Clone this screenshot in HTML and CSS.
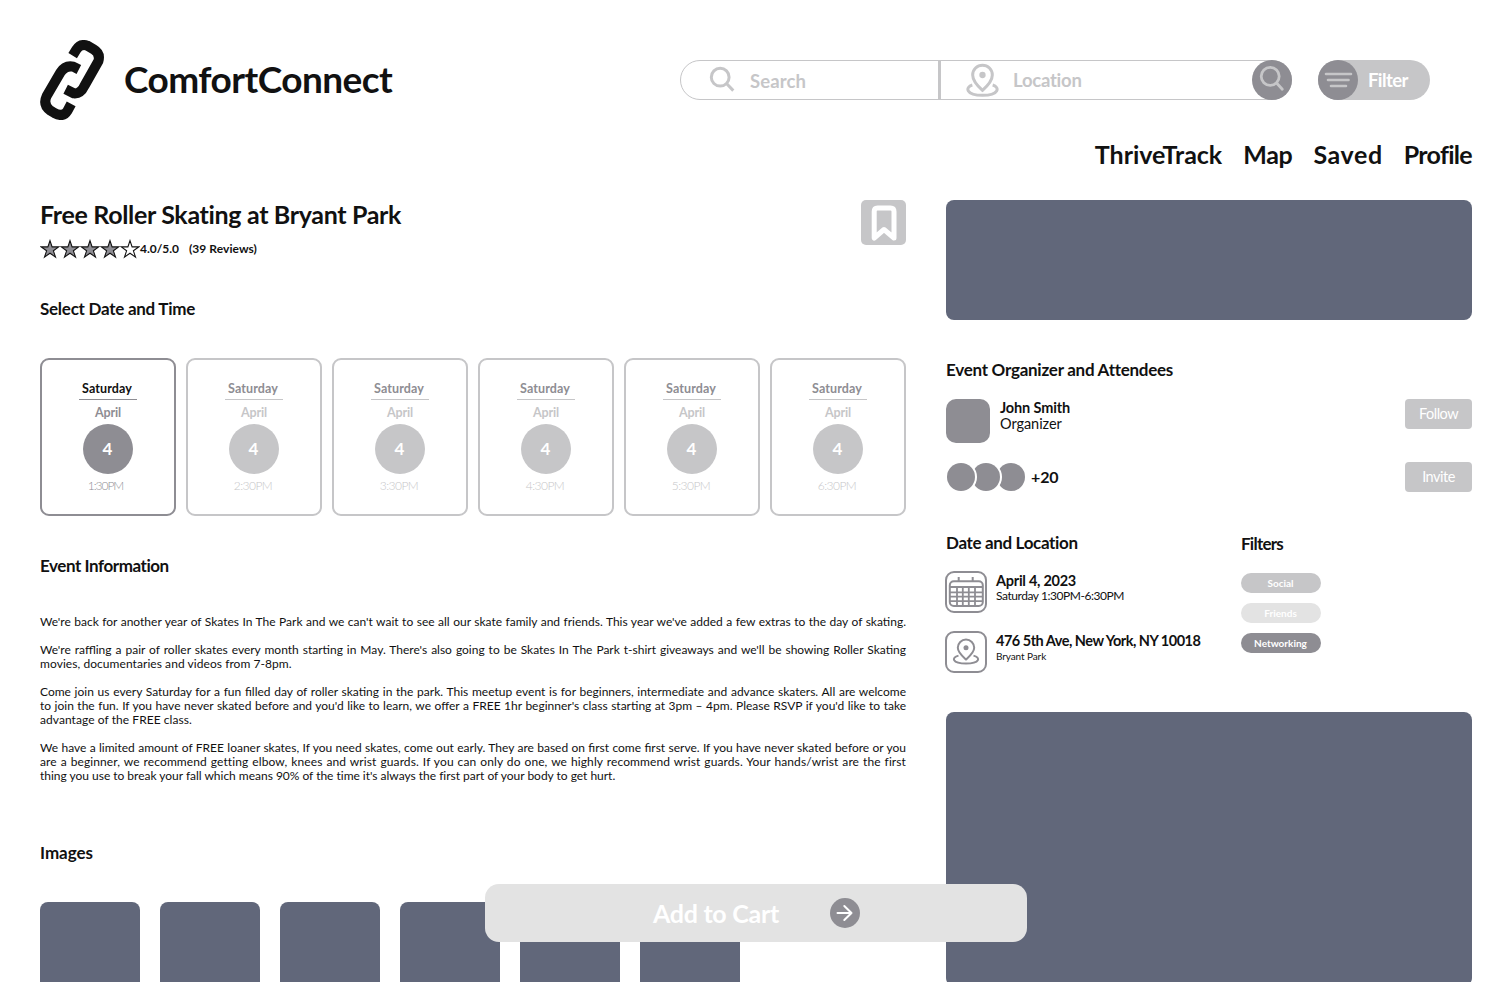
FILE: index.html
```html
<!DOCTYPE html>
<html lang="en">
<head>
<meta charset="utf-8">
<title>ComfortConnect</title>
<link rel="stylesheet" href="styles.css">
</head>
<body>
<header class="header">
  <div class="brand">
    <svg class="logo" viewBox="30 30 192 240" fill="none" stroke="#111" stroke-width="30">
      <path d="M128 77 L139 59 Q151 40 172 47 L191 58 Q212 70 205 94 L163 168 Q152 192 131 190 L107 178"/>
      <path d="M146.500 118.500 L130 110 Q105 105 91 128 L50 198 Q38 224 60 241 L73 249 Q100 263 112 243 L123.500 221.500"/>
    </svg>
    <span class="brand-name">ComfortConnect</span>
  </div>
  <div class="tools">
    <div class="search">
      <div class="field what">
        <svg class="glass" viewBox="0 0 28 28" fill="none" stroke="#c6c6c8" stroke-width="3"><circle cx="11.200" cy="11.200" r="8.900"/><path d="M17.500 17.500 L24.300 24.600"/></svg>
        <span class="t-search">Search</span>
      </div>
      <div class="field where">
        <svg class="pin" viewBox="889 38 99 102" fill="none" stroke="#c6c6c8" stroke-width="9"><path d="M938.500 120C925 108 909 92 909 74A29.500 29.500 0 0 1 968 74C968 92 952 108 938.500 120Z"/><circle cx="938.500" cy="74" r="9.500" fill="#c6c6c8" stroke="none"/><path d="M908 104C886 110 888 135 938.500 135C989 135 991 110 969 104"/></svg>
        <span class="t-location">Location</span>
      </div>
      <button class="go" aria-label="Search"><svg viewBox="0 0 40 40" fill="none" stroke="#c6c6c8" stroke-width="2.800" stroke-linecap="round"><circle cx="18.200" cy="16.300" r="9"/><path d="M24.800 23.300 L30.300 29.300"/></svg></button>
    </div>
    <button class="filter">
      <svg class="bars" viewBox="0 0 40 40"><circle cx="20" cy="20" r="20" fill="#8e8d93"/><path d="M8 14H33M10 20H30.500M13 26H28" stroke="#c6c6c8" stroke-width="2.600" stroke-linecap="round"/></svg>
      <span>Filter</span>
    </button>
  </div>
</header>
<nav class="nav"><a class="n1">ThriveTrack</a><a class="n2">Map</a><a class="n3">Saved</a><a class="n4">Profile</a></nav>

<main class="main">
  <section class="left">
    <div class="title-row">
      <div>
        <h1 class="title">Free Roller Skating at Bryant Park</h1>
        <div class="rating">
          <svg class="stars" viewBox="0 0 100 20" fill="#8e8d93" stroke="#111" stroke-width="1.100">
            <defs><path id="star" d="M10 1.600 L12.100 7.900 L18.700 7.900 L13.400 11.800 L15.500 18.100 L10 14.200 L4.500 18.100 L6.600 11.800 L1.300 7.900 L7.900 7.900Z"/></defs>
            <use href="#star"/><use href="#star" x="20"/><use href="#star" x="40"/><use href="#star" x="60"/><use href="#star" x="80" fill="#fff"/>
          </svg>
          <span class="score">4.0/5.0</span><span class="reviews">(39 Reviews)</span>
        </div>
      </div>
      <button class="bookmark" aria-label="Save"><svg viewBox="0 0 45 45" fill="none" stroke="#fff" stroke-width="5" stroke-linejoin="round"><path d="M13.200 38 V11.500 Q13.200 8 16.500 8 H29.500 Q33 8 33 11.500 V38 L23 29.500Z"/></svg></button>
    </div>

    <h2 class="h h-select">Select Date and Time</h2>
    <div class="slots">
      <div class="slot on"><b class="day">Saturday</b><b class="month">April</b><span class="num">4</span><span class="time first">1:30PM</span></div>
      <div class="slot"><b class="day">Saturday</b><b class="month">April</b><span class="num">4</span><span class="time">2:30PM</span></div>
      <div class="slot"><b class="day">Saturday</b><b class="month">April</b><span class="num">4</span><span class="time">3:30PM</span></div>
      <div class="slot"><b class="day">Saturday</b><b class="month">April</b><span class="num">4</span><span class="time">4:30PM</span></div>
      <div class="slot"><b class="day">Saturday</b><b class="month">April</b><span class="num">4</span><span class="time">5:30PM</span></div>
      <div class="slot"><b class="day">Saturday</b><b class="month">April</b><span class="num">4</span><span class="time">6:30PM</span></div>
    </div>

    <h2 class="h h-info">Event Information</h2>
    <div class="info">
      <p><span class="full">We're back for another year of Skates In The Park and we can't wait to see all our skate family and friends. This year we've added a few extras to the day of skating.</span></p>
      <p><span class="full">We're raffling a pair of roller skates every month starting in May. There's also going to be Skates In The Park t-shirt giveaways and we'll be showing Roller Skating</span><span class="end">movies, documentaries and videos from 7-8pm.</span></p>
      <p><span class="full">Come join us every Saturday for a fun filled day of roller skating in the park. This meetup event is for beginners, intermediate and advance skaters. All are welcome</span><span class="full">to join the fun. If you have never skated before and you'd like to learn, we offer a FREE 1hr beginner's class starting at 3pm – 4pm. Please RSVP if you'd like to take</span><span class="end">advantage of the FREE class.</span></p>
      <p><span class="full">We have a limited amount of FREE loaner skates, If you need skates, come out early. They are based on first come first serve. If you have never skated before or you</span><span class="full wide">are a beginner, we recommend getting elbow, knees and wrist guards. If you can only do one, we highly recommend wrist guards. Your hands/wrist are the first</span><span class="end last">thing you use to break your fall which means 90% of the time it's always the first part of your body to get hurt.</span></p>
    </div>

    <h2 class="h h-images">Images</h2>
    <div class="images"><i></i><i></i><i></i><i></i><i></i><i></i></div>
  </section>

  <aside class="right">
    <div class="banner"></div>
    <h2 class="h h-org">Event Organizer and Attendees</h2>
    <div class="person">
      <span class="avatar"></span>
      <div class="who"><b class="name">John Smith</b><span class="role">Organizer</span></div>
      <button class="btn follow">Follow</button>
    </div>
    <div class="people">
      <span class="dots"><i></i><i></i><i></i></span>
      <b class="more">+20</b>
      <button class="btn invite">Invite</button>
    </div>
    <div class="details">
      <div class="where-when">
        <h2 class="h h-date">Date and Location</h2>
        <div class="item">
          <svg class="ico" viewBox="0 0 42 42" fill="none" stroke="#8e8d93" stroke-width="2"><rect x="1" y="1" width="40" height="40" rx="8"/><rect x="4.800" y="10.300" width="33" height="24.700" rx="4"/><path d="M13.700 6V10M27.700 6V10M4.800 16H37.800" stroke-width="2"/><path d="M4.800 21.300H37.800M4.800 25.600H37.800M4.800 30.200H37.800M12 16V35M17.800 16V35M23.800 16V35M30 16V35" stroke-width="1.800"/></svg>
          <div class="lines"><b class="l1 date">April 4, 2023</b><span class="l2 hours">Saturday 1:30PM-6:30PM</span></div>
        </div>
        <div class="item">
          <svg class="ico" viewBox="0 0 42 42" fill="none" stroke="#8e8d93" stroke-width="2"><rect x="1" y="1" width="40" height="40" rx="8"/><path d="M21 28.500C17 25 12.800 21.500 12.800 16.800A8.200 8.200 0 0 1 29.200 16.800C29.200 21.500 25 25 21 28.500Z"/><circle cx="21" cy="16.800" r="2.500" fill="#8e8d93" stroke="none"/><path d="M13.500 24.600C6 26.500 7 32.600 21 32.600C35 32.600 36 26.500 28.500 24.600"/></svg>
          <div class="lines"><b class="l1 street">476 5th Ave, New York, NY 10018</b><span class="l2 park">Bryant Park</span></div>
        </div>
      </div>
      <div class="tags">
        <h2 class="h h-filters">Filters</h2>
        <span class="tag social">Social</span>
        <span class="tag friends">Friends</span>
        <span class="tag networking">Networking</span>
      </div>
    </div>
    <div class="map"></div>
  </aside>
</main>

<button class="cart"><span>Add to Cart</span><svg viewBox="0 0 30 30"><circle cx="15" cy="15" r="15" fill="#8e8d93"/><path d="M7.500 15H21.500M14.300 8L21.500 15L14.300 22" fill="none" stroke="#fff" stroke-width="2" stroke-linecap="round" stroke-linejoin="round"/></svg></button>
</body>
</html>
```
FILE: styles.css
```css
* { box-sizing: border-box; }
html, body { height: 982px; overflow: hidden; }
body { margin: 0; padding: 40px 40px 0; background: #fff; color: #111; font-family: Lato, "Liberation Sans", sans-serif; }
h1, h2, p { margin: 0; }
button { border: 0; padding: 0; font-family: inherit; }
svg { display: block; flex: none; }
span, b, a { white-space: nowrap; }

.header { display: flex; justify-content: space-between; align-items: center; height: 80px; }
.brand { display: flex; align-items: center; gap: 20px; }
.logo { width: 64px; height: 80px; }
.brand-name { font-size: 37px; font-weight: 700; line-height: 44px; letter-spacing: -.55px; margin-top: -3px; }
.tools { display: flex; gap: 26px; margin-right: 42px; }
.search { display: flex; width: 612px; height: 40px; border: 1px solid #c6c6c8; border-radius: 20px; color: #c6c6c8; font-size: 18.500px; font-weight: 700; line-height: 24px; }
.field { display: flex; align-items: center; }
.what { width: 260px; padding-left: 28px; gap: 13px; border-right: 3px solid #c6c6c8; }
.where { flex: 1; padding-left: 25px; gap: 14px; }
.glass { width: 28px; height: 28px; }
.pin { width: 33px; height: 34px; }
.t-search { letter-spacing: .1px; margin-top: 1px; }
.t-location { letter-spacing: -.25px; margin-top: -1px; }
.go { width: 40px; height: 40px; margin: -1px -1px 0 0; border-radius: 50%; background: #8e8d93; }
.filter { display: flex; align-items: center; gap: 10px; width: 112px; height: 40px; border-radius: 20px; background: #c6c6c8; color: #fff; font-size: 18.500px; font-weight: 700; line-height: 24px; letter-spacing: -.6px; }
.filter span { margin-top: -1px; }
.bars { width: 40px; height: 40px; }

.nav { display: flex; justify-content: flex-end; gap: 21px; margin-top: 19px; height: 29px; font-size: 25px; font-weight: 700; line-height: 30px; }
.n1 { letter-spacing: -.03px; }
.n2 { letter-spacing: -.3px; }
.n3 { letter-spacing: .6px; }
.n4 { letter-spacing: -.7px; }

.main { display: flex; gap: 40px; margin-top: 32px; }
.left { width: 866px; }
.right { width: 526px; }
.h { font-size: 17px; font-weight: 700; line-height: 20px; letter-spacing: -.26px; }

.title-row { display: flex; justify-content: space-between; height: 59px; }
.title { padding-top: 1px; font-size: 25px; font-weight: 700; line-height: 27px; letter-spacing: -.33px; }
.rating { display: flex; margin-top: 11px; height: 20px; font-size: 12px; font-weight: 700; line-height: 20px; }
.score { letter-spacing: -.03px; }
.stars { width: 100px; height: 20px; }
.reviews { margin-left: 10px; letter-spacing: .06px; }
.bookmark { width: 45px; height: 45px; border-radius: 5px; background: #c6c6c8; }

.h-select { margin-top: 40px; }
.slots { display: flex; gap: 10px; margin-top: 39px; }
.slot { display: flex; flex-direction: column; align-items: center; width: 136px; height: 158px; padding-top: 21px; border: 2px solid #c6c6c8; border-radius: 9px; color: #c6c6c8; font-size: 12.500px; }
.day { width: 58px; height: 19px; border-bottom: 1px solid #c6c6c8; color: #8e8d93; text-align: center; line-height: 15px; letter-spacing: .1px; padding-right: 2px; }
.month { margin-top: 5px; line-height: 16px; letter-spacing: -.14px; }
.num { width: 50px; height: 50px; margin-top: 3px; border-radius: 50%; background: #c6c6c8; color: #fff; font-size: 17px; font-weight: 700; line-height: 49px; text-align: center; padding-right: 1px; }
.time { margin-top: 4px; padding-right: 2px; font-size: 12px; font-weight: 300; line-height: 16px; letter-spacing: -.55px; }
.time.first { letter-spacing: -1.050px; padding-right: 5px; }
.slot.on { border-color: #8e8d93; color: #8e8d93; }
.on .day { color: #111; border-color: #8e8d93; }
.on .num { background: #8e8d93; }

.h-info { margin-top: 40px; letter-spacing: -.44px; }
.info { display: flex; flex-direction: column; gap: 14px; margin-top: 39px; font-size: 12px; line-height: 14px; }
.info span { display: block; }
.full { text-align: justify; text-align-last: justify; }
.wide { letter-spacing: .1px; }
.end { letter-spacing: .06px; }
.last { letter-spacing: -.015px; }
.h-images { margin-top: 60px; letter-spacing: -.03px; }
.images { display: flex; gap: 20px; margin-top: 39px; }
.images i { width: 100px; height: 100px; border-radius: 8px; background: #61677a; }

.banner { height: 120px; border-radius: 8px; background: #61677a; }
.h-org { margin-top: 40px; }
.person { display: flex; height: 44px; margin-top: 19px; }
.avatar { width: 44px; height: 44px; border-radius: 10px; background: #8e8d93; }
.who { display: flex; flex-direction: column; flex: 1; margin-left: 10px; font-size: 14.500px; line-height: 17px; }
.name { letter-spacing: -.14px; }
.role { margin-top: -1px; font-weight: 400; letter-spacing: -.05px; }
.btn { width: 67px; height: 30px; border-radius: 4px; background: #c6c6c8; color: #fff; font-size: 14.500px; font-weight: 400; line-height: 30px; letter-spacing: -.5px; }
.people { display: flex; align-items: center; height: 30px; margin-top: 19px; }
.dots { display: flex; padding-left: 1px; }
.dots i { width: 28px; height: 28px; margin-right: -3px; border-radius: 50%; background: #8e8d93; box-shadow: 0 0 0 2px #fff; position: relative; }
.dots i:nth-child(1) { z-index: 3; }
.dots i:nth-child(2) { z-index: 2; }
.more { flex: 1; margin: -1px 0 0 9px; font-size: 16px; line-height: 20px; letter-spacing: -.1px; }
.invite { line-height: 28px; padding-bottom: 1px; }

.details { display: flex; height: 179px; margin-top: 41px; }
.where-when { width: 295px; }
.h-date { letter-spacing: -.34px; margin-bottom: 18px; }
.item { display: flex; gap: 9px; height: 60px; margin-left: -1px; }
.ico { width: 42px; height: 42px; }
.lines { display: flex; flex-direction: column; padding-top: 1px; }
.l1 { font-size: 14.500px; line-height: 17px; }
.l2 { margin-top: -1px; line-height: 16px; }
.date { letter-spacing: -.27px; }
.hours { font-size: 12px; letter-spacing: -.45px; }
.street { letter-spacing: -.5px; }
.park { font-size: 10px; letter-spacing: -.1px; }
.tags { display: flex; flex-direction: column; align-items: flex-start; gap: 10px; }
.h-filters { margin: 1px 0 9px; letter-spacing: -.75px; }
.tag { width: 80px; height: 20px; border-radius: 10px; background: #c6c6c8; color: #fff; font-size: 10px; font-weight: 700; line-height: 20px; text-align: center; padding-right: 1px; }
.friends { background: #e3e3e3; }
.networking { background: #8e8d93; }
.map { height: 274px; border-radius: 8px; background: #61677a; }

/* Purchase bar floats above the page content */
.cart { position: fixed; left: 485px; top: 884px; display: flex; align-items: center; gap: 51px; width: 542px; height: 58px; padding-left: 168px; border-radius: 14px; background: #e3e3e3; color: #fff; font-size: 25px; font-weight: 700; line-height: 30px; letter-spacing: -.28px; }
.cart svg { width: 30px; height: 30px; }
```
